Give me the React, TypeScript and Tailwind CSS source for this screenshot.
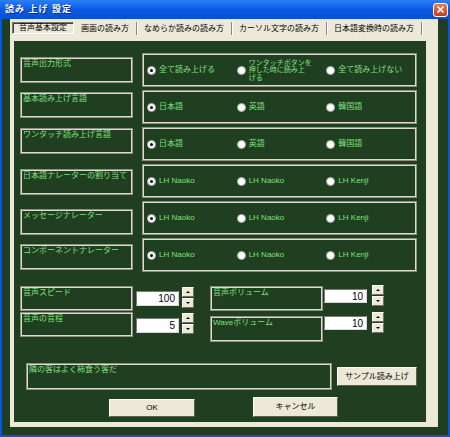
type Opt = { label: string; checked?: boolean; multi?: boolean };

const rows: { title: string; off: string; opts: Opt[] }[] = [
  {
    title: '音声出力形式',
    off: 'mt-[4px]',
    opts: [
      { label: '全て読み上げる', checked: true },
      { label: 'ワンタッチボタンを', multi: true },
      { label: '全て読み上げない' },
    ],
  },
  {
    title: '基本読み上げ言語',
    off: 'mt-[2px]',
    opts: [{ label: '日本語', checked: true }, { label: '英語' }, { label: '韓国語' }],
  },
  {
    title: 'ワンタッチ読み上げ言語',
    off: 'mt-[1px]',
    opts: [{ label: '日本語', checked: true }, { label: '英語' }, { label: '韓国語' }],
  },
  {
    title: '日本語ナレーターの割り当て',
    off: 'mt-[5px]',
    opts: [{ label: 'LH Naoko', checked: true }, { label: 'LH Naoko' }, { label: 'LH Kenji' }],
  },
  {
    title: 'メッセージナレーター',
    off: 'mt-[8px]',
    opts: [{ label: 'LH Naoko', checked: true }, { label: 'LH Naoko' }, { label: 'LH Kenji' }],
  },
  {
    title: 'コンポーネントナレーター',
    off: 'mt-[6px]',
    opts: [{ label: 'LH Naoko', checked: true }, { label: 'LH Naoko' }, { label: 'LH Kenji' }],
  },
];

const frame =
  'border border-[#8f8e84] shadow-[inset_0_0_0_1px_#dedcd0]';

function Radio({ checked }: { checked?: boolean }) {
  return (
    <span className="flex h-[9px] w-[9px] shrink-0 items-center justify-center rounded-full border border-[#a8a8a0] bg-white">
      {checked && <span className="h-[3px] w-[3px] rounded-full bg-black" />}
    </span>
  );
}

function LabelBox({ text, className }: { text: string; className: string }) {
  return (
    <div className={`${frame} px-[2px] pt-[1px] text-[8px] leading-[10px] text-[#7fe07f] ${className}`}>
      {text}
    </div>
  );
}

function Spin({ className }: { className: string }) {
  const btn =
    'flex h-[10px] items-center justify-center border border-t-white border-l-white border-r-[#716f64] border-b-[#716f64] bg-[#ece9d8]';
  return (
    <div className={`flex w-[12px] flex-col gap-[1px] ${className}`}>
      <div className={btn}>
        <span className="h-0 w-0 border-x-[2px] border-b-[2px] border-x-transparent border-b-black" />
      </div>
      <div className={btn}>
        <span className="h-0 w-0 border-x-[2px] border-t-[2px] border-x-transparent border-t-black" />
      </div>
    </div>
  );
}

function NumBox({ value, className }: { value: string; className: string }) {
  return (
    <div
      className={`w-[43px] border border-t-[#7a7a7a] border-l-[#7a7a7a] border-r-[#d8d8d8] border-b-[#d8d8d8] bg-white pr-[3px] text-right text-[10px] leading-[13px] text-black ${className}`}
    >
      {value}
    </div>
  );
}

function Button({ label, className }: { label: string; className: string }) {
  return (
    <div
      className={`flex items-center justify-center border border-t-white border-l-white border-r-[#5f5d52] border-b-[#5f5d52] bg-[#ece9d8] text-[8px] text-black ${className}`}
    >
      {label}
    </div>
  );
}

const tabs = ['画面の読み方', 'なめらか読みの読み方', 'カーソル文字の読み方', '日本語変換時の読み方'];

export default function App() {
  return (
    <div className="flex h-[437px] w-[450px] flex-col bg-[#0a55de] font-['Liberation_Sans','Noto_Sans_CJK_JP',sans-serif]">
      {/* title bar */}
      <div className="flex h-[19px] items-center justify-between bg-gradient-to-b from-[#2a7ff6] via-[#0b5ae4] to-[#0a4fd4] pl-[5px] pr-[2px]">
        <span className="text-[9px] font-bold tracking-[1px] text-white [text-shadow:1px_1px_0_#0a2a80]">
          読み 上げ 設定
        </span>
        <div className="flex h-[14px] w-[15px] items-center justify-center rounded-[3px] border border-white bg-gradient-to-b from-[#e8775a] to-[#c43d1c]">
          <svg width="9" height="9" viewBox="0 0 9 9">
            <path d="M1.5 1.5 L7.5 7.5 M7.5 1.5 L1.5 7.5" stroke="white" strokeWidth="1.6" />
          </svg>
        </div>
      </div>

      {/* body */}
      <div className="mx-[2px] mb-[2px] flex flex-1 flex-col bg-[#203f20] pb-[8px] pl-[8px] pr-[10px]">
        <div className="flex flex-1 flex-col bg-[#ece9d8]">
          {/* tabs */}
          <div className="flex h-[22px] items-start pl-[2px] pt-[3px] text-[8px] text-black">
            <div className="flex h-[12px] w-[62px] items-center justify-center border border-t-[#7a786c] border-l-[#7a786c] border-r-white border-b-white shadow-[inset_1px_1px_0_#404040]">
              音声基本設定
            </div>
            {tabs.map((t) => (
              <div
                key={t}
                className="flex h-[13px] items-center border-r border-r-[#8a887c] px-[7px] shadow-[1px_0_0_white]"
              >
                {t}
              </div>
            ))}
          </div>

          {/* panel */}
          <div className="flex flex-1 pb-[5px] pl-[4px] pr-[12px]">
            <div className="flex flex-1 flex-col bg-[#203f20] pl-[6px] pt-[12px]">
              <div className="flex flex-col gap-[3px]">
                {rows.map((r) => (
                  <div key={r.title} className="flex h-[34px] items-start">
                    <LabelBox text={r.title} className={`h-[26px] w-[113px] ${r.off}`} />
                    <div className={`${frame} ml-[9px] flex h-[34px] w-[275px] items-center pl-[4px]`}>
                      {r.opts.map((o, i) => (
                        <div key={i} className="flex w-[90px] items-center gap-[3px]">
                          <Radio checked={o.checked} />
                          {o.multi ? (
                            <span className="text-[7px] leading-[7.5px] text-[#7fe07f]">
                              ワンタッチボタンを
                              <br />
                              押した時に読み上
                              <br />
                              げる
                            </span>
                          ) : (
                            <span className="whitespace-nowrap text-[8px] leading-[10px] text-[#7fe07f]">
                              {o.label}
                            </span>
                          )}
                        </div>
                      ))}
                    </div>
                  </div>
                ))}
              </div>

              {/* speed / volume */}
              <div className="mt-[13px] flex items-start">
                <div className="flex w-[113px] flex-col">
                  <LabelBox text="音声スピード" className="mt-[1px] h-[25px]" />
                  <LabelBox text="音声の音程" className="mt-[1px] h-[25px]" />
                </div>
                <div className="ml-[3px] flex flex-col">
                  <NumBox value="100" className="mt-[6px] h-[15px]" />
                  <NumBox value="5" className="mt-[12px] h-[15px]" />
                </div>
                <div className="ml-[3px] flex flex-col">
                  <Spin className="mt-[2px]" />
                  <Spin className="mt-[5px]" />
                </div>
                <div className="ml-[16px] flex w-[113px] flex-col">
                  <LabelBox text="音声ボリューム" className="mt-[1px] h-[25px]" />
                  <LabelBox text="Waveボリューム" className="mt-[5px] h-[26px]" />
                </div>
                <div className="ml-[1px] flex flex-col">
                  <NumBox value="10" className="mt-[4px] h-[14px]" />
                  <NumBox value="10" className="mt-[13px] h-[14px]" />
                </div>
                <div className="ml-[5px] flex flex-col">
                  <Spin className="" />
                  <Spin className="mt-[6px]" />
                </div>
              </div>

              {/* sample */}
              <div className="mt-[21px] flex items-start pl-[6px]">
                <LabelBox text="隣の客はよく柿食う客だ" className="h-[27px] w-[306px]" />
                <Button label="サンプル読み上げ" className="ml-[5px] mt-[4px] h-[19px] w-[80px]" />
              </div>

              {/* ok / cancel */}
              <div className="mt-[7px] flex items-start pl-[89px]">
                <Button label="OK" className="mt-[2px] h-[18px] w-[86px]" />
                <Button label="キャンセル" className="ml-[58px] h-[20px] w-[85px]" />
              </div>
            </div>
          </div>
        </div>
      </div>
    </div>
  );
}
